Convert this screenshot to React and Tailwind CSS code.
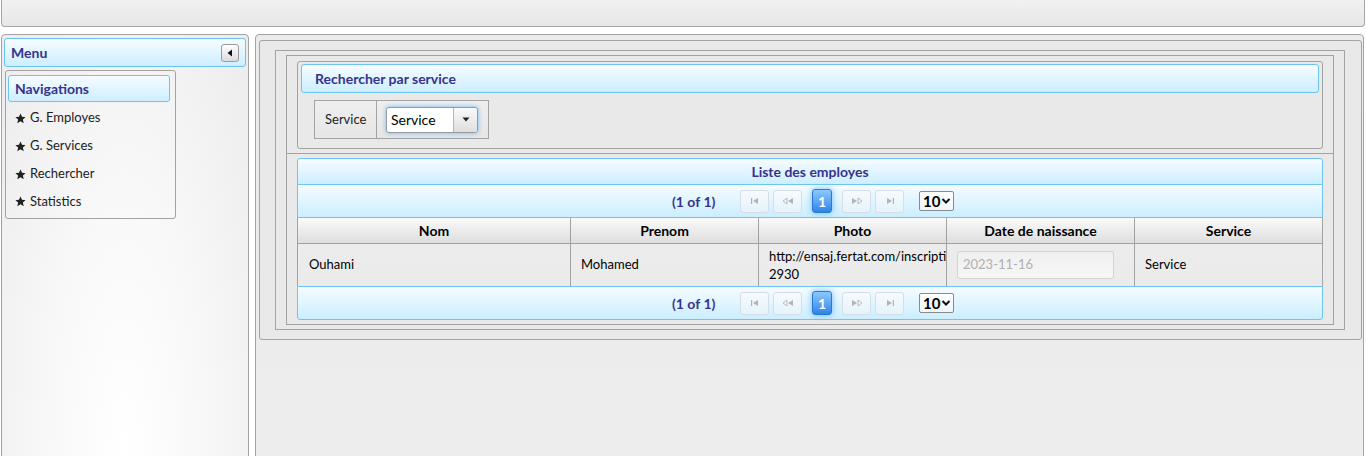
import React from "react";

const Star = () => (
  <svg width="11" height="11" viewBox="0 0 24 24" className="shrink-0">
    <path d="M12 1l3.3 7.3 7.9.7-6 5.3 1.8 7.8L12 18l-7 4.1 1.8-7.8-6-5.3 7.9-.7z" fill="#222" />
  </svg>
);

const PagIcon = ({ kind }) => {
  const c = "#b3b3b3";
  return (
    <svg width="12" height="8" viewBox="0 0 12 8">
      {kind === "first" && (
        <>
          <rect x="2" y="1" width="1.2" height="6" fill={c} />
          <path d="M4 4l5-3v6z" fill={c} />
        </>
      )}
      {kind === "prev" && (
        <>
          <path d="M1 4l4-3v6z" fill="none" stroke={c} strokeWidth="0.9" />
          <path d="M6 4l5-3v6z" fill={c} />
        </>
      )}
      {kind === "next" && (
        <>
          <path d="M1 1l5 3-5 3z" fill={c} />
          <path d="M7 1l4 3-4 3z" fill="none" stroke={c} strokeWidth="0.9" />
        </>
      )}
      {kind === "last" && (
        <>
          <path d="M3 1l5 3-5 3z" fill={c} />
          <rect x="8.8" y="1" width="1.2" height="6" fill={c} />
        </>
      )}
    </svg>
  );
};

const PagBtn = ({ kind, w }) => (
  <div
    className={`${w} h-[23px] flex items-center justify-center rounded-[3px] border border-[#d6dde3] bg-linear-to-b from-[#f6fbfe] to-[#e4f3fb]`}
  >
    <PagIcon kind={kind} />
  </div>
);

const Paginator = ({ bottom }) => (
  <div
    className={`h-[33px] flex items-center justify-center pl-[6px] border border-[#6ec4f0] bg-linear-to-b from-[#f5fcff] to-[#cbeeff] ${
      bottom ? "rounded-b-[3px] h-[34px]" : "border-t-0"
    }`}
  >
    <span className="font-bold text-[14px] text-[#37338d] w-[43px] whitespace-nowrap">(1 of 1)</span>
    <div className="ml-[25px] flex items-center">
      <PagBtn kind="first" w="w-[29px]" />
      <div className="ml-[4px]">
        <PagBtn kind="prev" w="w-[29px]" />
      </div>
      <div className="ml-[10px] w-[20px] h-[24px] rounded-[3px] border border-[#2a78d2] bg-linear-to-b from-[#8cc8ff] to-[#2a86e6] text-white font-bold text-[14px] flex items-center justify-center shadow-[0_0_6px_#6bb8ff]">
        1
      </div>
      <div className="ml-[10px]">
        <PagBtn kind="next" w="w-[29px]" />
      </div>
      <div className="ml-[4px]">
        <PagBtn kind="last" w="w-[29px]" />
      </div>
      <div className="ml-[15px] w-[35px] h-[20px] border border-[#8a8a8a] rounded-[2px] bg-linear-to-b from-[#ffffff] to-[#eef6fb] flex items-center pl-[3px] gap-[1px]">
        <span className="font-bold text-[15px] text-black leading-none">10</span>
        <svg width="10" height="8" viewBox="0 0 10 8">
          <path d="M1.5 2l3.5 3.5L8.5 2" fill="none" stroke="#111" strokeWidth="2" />
        </svg>
      </div>
    </div>
  </div>
);

const cols = [
  { t: "Nom", w: "w-[273px]" },
  { t: "Prenom", w: "w-[188px]" },
  { t: "Photo", w: "w-[188px]" },
  { t: "Date de naissance", w: "w-[188px]" },
  { t: "Service", w: "w-[189px] border-r" },
];

export default function App() {
  return (
    <div className="w-[1366px] h-[456px] overflow-hidden bg-white font-[Lato,sans-serif] text-[13px] text-[#222] flex flex-col">
      {/* top bar */}
      <div className="ml-[1px] w-[1364px] h-[27px] shrink-0 border border-t-0 border-[#a6a6a6] rounded-b-[4px] bg-linear-to-b from-[#f1f1f1] to-[#e7e7e7]" />

      <div className="flex mt-[7px] flex-1 min-h-0">
        {/* left panel */}
        <div className="ml-[1px] w-[248px] h-[440px] border border-[#a3a3a3] rounded-t-[4px] bg-[radial-gradient(ellipse_at_50%_95%,#ffffff_0%,#f8f8f8_45%,#ececec_100%)] pt-[3px] px-[2px]">
          <div className="h-[29px] border border-[#6ec4f0] rounded-[3px] bg-linear-to-b from-[#f6fcff] to-[#cdeeff] flex items-center pl-[6px] pr-[6px]">
            <span className="font-bold text-[14px] text-[#37338d]">Menu</span>
            <div className="ml-auto w-[18px] h-[18px] rounded-[3px] border border-[#9a9a9a] bg-linear-to-b from-[#ffffff] to-[#dcdcdc] flex items-center justify-center">
              <svg width="6" height="8" viewBox="0 0 6 8">
                <path d="M5 0.5v7L0.5 4z" fill="#111" />
              </svg>
            </div>
          </div>
          <div className="ml-[1px] mt-[3px] w-[171px] h-[149px] border border-[#a3a3a3] rounded-[3px] pt-[4px] pl-[2px]">
            <div className="w-[162px] h-[27px] border border-[#6ec4f0] rounded-[3px] bg-linear-to-b from-[#f6fcff] to-[#cdeeff] flex items-center pl-[6px]">
              <span className="font-bold text-[14px] text-[#37338d]">Navigations</span>
            </div>
            <div className="mt-[2px]">
              {["G. Employes", "G. Services", "Rechercher", "Statistics"].map((t, i) => (
                <div key={t} className={`${i === 3 ? "h-[27px]" : "h-[28px]"} flex items-center pl-[7px] gap-[4px]`}>
                  <Star />
                  <span className="text-[13px] text-[#222]">{t}</span>
                </div>
              ))}
            </div>
          </div>
        </div>

        {/* right panel */}
        <div className="ml-[6px] w-[1109px] h-[440px] border border-[#a3a3a3] rounded-t-[4px] bg-linear-to-b from-[#ebebeb] to-[#ededed] pt-[5px] pl-[3px]">
          <div className="w-[1103px] h-[300px] border border-[#a3a3a3] rounded-[3px] bg-[#e9e9e9] pt-[9px] pl-[15px]">
            <div className="w-[1070px] h-[280px] border border-[#a3a3a3] pt-[4px] pl-[10px]">
              <div className="w-[1048px] h-[270px] border border-[#a3a3a3] flex flex-col">
                {/* row 1 */}
                <div className="h-[98px] pt-[5px] pl-[10px] border-b border-[#a3a3a3]">
                  <div className="w-[1026px] h-[88px] border border-[#a3a3a3] rounded-[3px] pt-[2px] pl-[3px]">
                    <div className="w-[1018px] h-[29px] border border-[#6ec4f0] rounded-[3px] bg-linear-to-b from-[#f6fcff] to-[#cdeeff] flex items-center pl-[13px]">
                      <span className="font-bold text-[14px] text-[#37338d]">Rechercher par service</span>
                    </div>
                    <div className="mt-[7px] ml-[13px] flex w-[175px] h-[39px] border border-[#a3a3a3] bg-linear-to-b from-[#efefef] to-[#e6e6e6]">
                      <div className="w-[62px] flex items-center pl-[10px] border-r border-[#a3a3a3]">
                        <span className="text-[13px]">Service</span>
                      </div>
                      <div className="flex items-center pl-[9px]">
                        <div className="w-[92px] h-[26px] flex border border-[#9a9a9a] rounded-[3px] bg-white shadow-[0_0_5px_#6fb6ff]">
                          <div className="flex-1 flex items-center pl-[4px] text-[14px] text-black">Service</div>
                          <div className="w-[24px] border-l border-[#b5b5b5] bg-linear-to-b from-[#fafafa] to-[#dedede] flex items-center justify-center rounded-r-[3px]">
                            <svg width="8" height="5" viewBox="0 0 8 5">
                              <path d="M0.5 0.5h7L4 4.5z" fill="#222" />
                            </svg>
                          </div>
                        </div>
                      </div>
                    </div>
                  </div>
                </div>
                {/* row 2 */}
                <div className="pt-[4px] pl-[10px]">
                  <div className="w-[1026px]">
                    <div className="h-[27px] border border-[#6ec4f0] rounded-t-[3px] bg-linear-to-b from-[#f6fcff] to-[#cdeeff] flex items-center justify-center">
                      <span className="font-bold text-[14px] text-[#37338d]">Liste des employes</span>
                    </div>
                    <Paginator />
                    <div className="flex h-[26px] border-b border-[#a3a3a3] bg-linear-to-b from-[#fafafa] to-[#dedede]">
                      {cols.map((c) => (
                        <div key={c.t} className={`${c.w} border-l border-[#a3a3a3] flex items-center justify-center font-bold text-[14px] text-black`}>
                          {c.t}
                        </div>
                      ))}
                    </div>
                    <div className="flex h-[42px] bg-linear-to-b from-[#ececec] to-[#ebebeb] text-[13px] text-black">
                      <div className="w-[273px] border-l border-[#a3a3a3] flex items-center pl-[11px]">Ouhami</div>
                      <div className="w-[188px] border-l border-[#a3a3a3] flex items-center pl-[10px]">Mohamed</div>
                      <div className="w-[188px] border-l border-[#a3a3a3] flex flex-col justify-center pl-[10px] overflow-hidden leading-[18px]">
                        <span className="whitespace-nowrap">http://ensaj.fertat.com/inscripti</span>
                        <span>2930</span>
                      </div>
                      <div className="w-[188px] border-l border-[#a3a3a3] flex items-center pl-[10px]">
                        <div className="w-[157px] h-[28px] border border-[#d4d4d4] rounded-[3px] bg-linear-to-b from-[#f0f0f0] to-[#f6f6f6] flex items-center pl-[5px] text-[#b0b0b0] text-[13px]">
                          2023-11-16
                        </div>
                      </div>
                      <div className="w-[189px] border-l border-r border-[#a3a3a3] flex items-center pl-[10px]">Service</div>
                    </div>
                    <Paginator bottom />
                  </div>
                </div>
              </div>
            </div>
          </div>
        </div>
      </div>
    </div>
  );
}
